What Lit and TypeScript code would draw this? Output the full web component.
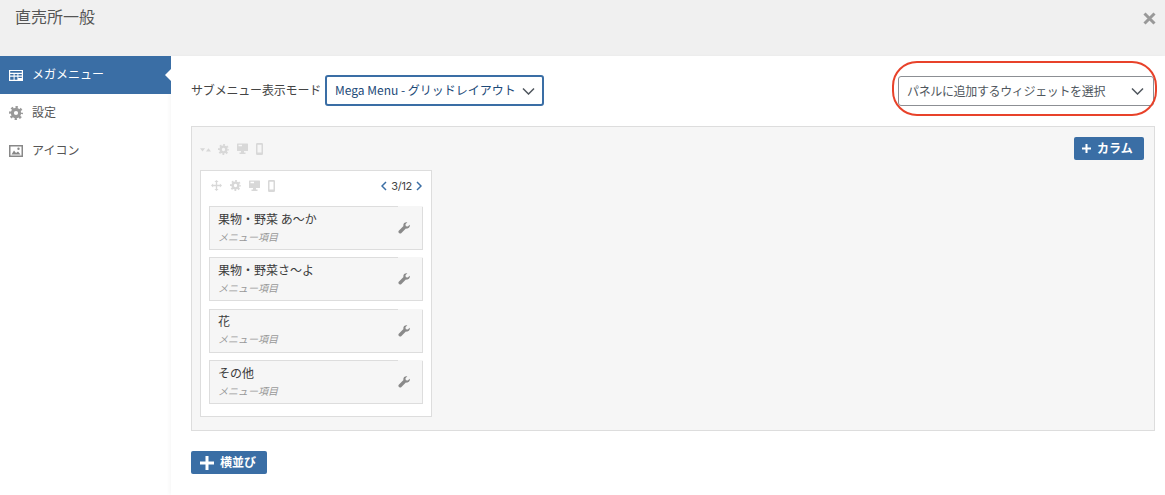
import { LitElement, html, css, svg } from "lit";
import { customElement } from "lit/decorators.js";

const gear = (c: string, s = 11) => html`<svg class="ic" width=${s} height=${s} viewBox="0 0 20 20"><circle cx="10" cy="10" r="5.200" fill="none" stroke=${c} stroke-width="4.400"/><circle cx="10" cy="10" r="8.200" fill="none" stroke=${c} stroke-width="3.600" stroke-dasharray="3.220 3.220" stroke-dashoffset="1.610"/></svg>`;
const desktop = (c: string) => html`<svg class="ic" width="11" height="12" viewBox="0 0 11 12"><path fill=${c} fill-rule="evenodd" d="M.5.500h10a.5.500 0 0 1 .5.500v6.500a.5.500 0 0 1-.5.500H7v1.500h1.500V11h-6V9.500H4V8H.5A.5.500 0 0 1 0 7.500V1A.5.500 0 0 1 .5.500zm1 1.300v1.500h3.500V1.800z"/></svg>`;
const mobile = (c: string) => html`<svg class="ic" width="7" height="12" viewBox="0 0 7 12"><path fill=${c} fill-rule="evenodd" d="M1.200 0h4.600A1.200 1.200 0 0 1 7 1.200v9.600A1.200 1.200 0 0 1 5.800 12H1.200A1.200 1.200 0 0 1 0 10.800V1.200A1.200 1.200 0 0 1 1.200 0zm.300 1.800v7.700h4V1.800z"/></svg>`;
const arrows = (c: string) => html`<svg class="ic" width="11" height="11" viewBox="0 0 13 13"><path fill=${c} d="M6.500 0 9 2.500H7.300v3.200h3.200V4L13 6.500 10.500 9V7.300H7.300v3.200H9L6.500 13 4 10.500h1.700V7.300H2.500V9L0 6.500 2.500 4v1.700h3.200V2.500H4z"/></svg>`;
const updown = (c: string) => html`<svg class="ic" width="11" height="11" viewBox="0 0 13 13"><path fill=${c} d="M0 5h6L3 9zM7 9h6l-3-4z"/></svg>`;
const wrench = html`<svg width="12" height="12" viewBox="0 0 14 14"><path fill="#8a8a8a" d="M13.700 3.100c.4 1.400 0 2.800-1 3.700-1 .9-2.300 1.200-3.500.800L3.700 13.100c-.6.600-1.500.6-2.100 0l-.7-.7c-.6-.6-.6-1.500 0-2.100l5.500-5.500c-.4-1.200-.1-2.500.8-3.500C8.100.4 9.500 0 10.900.3L8.700 2.600l.4 2.300 2.300.4z"/></svg>`;
const chev = svg`<path d="M1 1.500 6.500 7 12 1.500" fill="none" stroke="#50575e" stroke-width="1.500"/>`;

const items = ["果物・野菜 あ〜か", "果物・野菜さ〜よ", "花", "その他"];

@customElement("app-root")
export class AppRoot extends LitElement {
  static styles = css`
    :host { display: block; width: 1165px; height: 495px; overflow: hidden; background: #fff; position: relative;
      font-family: "Inter", "Noto Sans CJK JP", sans-serif; color: #444; font-size: 12px; }
    * { box-sizing: border-box; }
    .ic { display: block; flex: none; }
    header { height: 56px; background: #f0f0f0; display: flex; justify-content: space-between; padding: 4px 9px 0 15px; }
    h1 { margin: 0; font-size: 16px; line-height: 24px; font-weight: 400; color: #555; font-family: "Noto Sans CJK JP", sans-serif; }
    .close { margin-top: 8px; }
    .body { display: flex; height: 439px; }
    nav { width: 171px; flex: none; display: flex; flex-direction: column; }
    .tab { height: 38px; display: flex; align-items: center; gap: 9px; padding: 0 0 0 9px; color: #555; position: relative;
      font-family: "Noto Sans CJK JP", sans-serif; font-size: 12px; }
    .tab span { margin-top: -3px; }
    .tab.on { background: #3a6ea5; color: #fff; }
    .tab.on::after { content: ""; position: absolute; right: 0; top: 13px; border: 6px solid transparent; border-right-color: #fff; border-left-width: 0; }
    main { flex: 1; padding: 19px 10px 0 20px; box-shadow: -2px 0 4px rgba(0,0,0,.03); }
    .top { display: flex; align-items: center; justify-content: space-between; height: 32px; }
    .mode { display: flex; align-items: center; gap: 4px; font-family: "Noto Sans CJK JP", sans-serif; letter-spacing: -.18px; margin-top: -1px; }
    .mode > span { margin-top: -3px; }
    .select { display: flex; align-items: center; justify-content: space-between; border-radius: 3px; background: #fff; letter-spacing: 0; }
    .select span { margin-top: -2px; }
    .select.a { width: 219px; height: 31px; border: 2px solid #3a6ea5; color: #1d4a78; padding: 0 7px 0 8px; }
    .select.b { width: 256px; height: 30px; border: 1px solid #8c8f94; color: #50575e; padding: 0 9px 0 8px; margin-right: 1px; letter-spacing: -.35px; }
    .grid { margin-top: 19px; height: 305px; width: 964px; border: 1px solid #ddd; background: #f6f6f6; padding: 10px 8px 0 8px; }
    .rowbar { display: flex; justify-content: space-between; align-items: flex-start; padding-right: 2px; }
    .tools { display: flex; align-items: center; padding-top: 6px; }
    .g1 { gap: 8px; }
    .g1 .ic:nth-child(2) { margin-left: -1px; }
    .btn { display: inline-flex; align-items: center; background: #3a6ea5; color: #fff; border-radius: 2px; font-weight: 700; font-family: "Noto Sans CJK JP", sans-serif; }
    .btn span { margin-top: -2px; }
    .btn.col { height: 23px; width: 70px; padding-left: 8px; gap: 6px; font-size: 12px; }
    .column { margin-top: 10px; width: 232px; height: 247px; background: #fff; border: 1px solid #ddd; padding: 7px 8px 0 8px; }
    .colbar { display: flex; justify-content: space-between; align-items: center; height: 15px; padding: 0 1px 0 2px; margin-bottom: 13px; }
    .colbar .tools { padding: 0; gap: 8px; }
    .pager { display: flex; align-items: center; gap: 4px; font-size: 11px; letter-spacing: -.3px; color: #444; }
    .item { height: 44px; background: #f6f6f6; border: 1px solid #ddd; display: flex; justify-content: space-between; align-items: center; padding: 0 12px 0 8px; margin-bottom: 7.400px; position: relative; font-family: "Noto Sans CJK JP", sans-serif; }
    .item::after { content: ""; position: absolute; right: -1px; top: -1px; width: 25px; height: 1px; background: #f6f6f6; }
    .name { font-size: 12px; line-height: 18px; color: #3c3c3c; margin-top: -3px; }
    .sub { font-size: 10px; line-height: 14px; font-style: italic; color: #999; margin-top: 2px; }
    .btn.row { margin-top: 20px; width: 76px; height: 23px; padding-left: 9px; gap: 6px; font-size: 12px; }
    .ring { position: absolute; left: 892px; top: 61px; width: 265px; height: 55px; border: 2px solid #e8422a; border-radius: 25px; pointer-events: none; }
  `;

  render() {
    const pale = "#d8d8d8";
    return html`
      <header>
        <h1>直売所一般</h1>
        <svg class="close" width="13" height="13" viewBox="0 0 13 13"><path d="M1.500 1.500l10 10M11.500 1.500l-10 10" stroke="#999" stroke-width="3"/></svg>
      </header>
      <div class="body">
        <nav>
          <div class="tab on">
            <svg class="ic" width="14" height="13" viewBox="0 0 14 13"><path fill="#fff" fill-rule="evenodd" d="M0 1h14v11H0zm1.200 1.100v1.700h11.600V2.100zm0 2.900v1.600h3.400V5zm4.400 0v1.600h2.800V5zm3.800 0v1.600h3.400V5zM1.200 7.700v3.100h3.400V7.700zm4.400 0v3.100h2.800V7.700zm3.800 0v1.300h3.400V7.700z"/></svg>
            <span>メガメニュー</span>
          </div>
          <div class="tab">${gear("#999", 14)}<span>設定</span></div>
          <div class="tab">
            <svg class="ic" width="14" height="14" viewBox="0 0 14 14"><path fill="#888" fill-rule="evenodd" d="M0 1h14v12H0zm1.500 1.500v9h11v-9zM2.500 10.500 5 6.500l2 2.500 2-1.500 2.500 3zM9.500 3.500a1.200 1.200 0 1 1 0 2.400 1.200 1.200 0 0 1 0-2.400z"/></svg>
            <span>アイコン</span>
          </div>
        </nav>
        <main>
          <div class="top">
            <div class="mode">
              <span>サブメニュー表示モード</span>
              <div class="select a"><span>Mega Menu - グリッドレイアウト</span><svg class="ic" width="13" height="8" viewBox="0 0 13 8">${chev}</svg></div>
            </div>
            <div class="select b"><span>パネルに追加するウィジェットを選択</span><svg class="ic" width="13" height="8" viewBox="0 0 13 8">${chev}</svg></div>
          </div>
          <section class="grid">
            <div class="rowbar">
              <div class="tools g1">${updown(pale)}${gear(pale)}${desktop(pale)}${mobile(pale)}</div>
              <div class="btn col"><svg class="ic" width="9" height="9" viewBox="0 0 9 9"><path d="M4.500 0v9M0 4.500h9" stroke="#fff" stroke-width="2"/></svg><span>カラム</span></div>
            </div>
            <div class="column">
              <div class="colbar">
                <div class="tools">${arrows(pale)}${gear(pale)}${desktop(pale)}${mobile(pale)}</div>
                <div class="pager">
                  <svg class="ic" width="6" height="10" viewBox="0 0 6 10"><path d="M5 1 1 5l4 4" fill="none" stroke="#3a6ea5" stroke-width="1.500"/></svg>
                  <span>3/12</span>
                  <svg class="ic" width="6" height="10" viewBox="0 0 6 10"><path d="M1 1l4 4-4 4" fill="none" stroke="#3a6ea5" stroke-width="1.500"/></svg>
                </div>
              </div>
              ${items.map(n => html`<div class="item"><div><div class="name">${n}</div><div class="sub">メニュー項目</div></div>${wrench}</div>`)}
            </div>
          </section>
          <div class="btn row"><svg class="ic" width="14" height="14" viewBox="0 0 14 14"><path d="M7 0v14M0 7h14" stroke="#fff" stroke-width="3"/></svg><span>横並び</span></div>
        </main>
      </div>
      <div class="ring"></div>
    `;
  }
}
